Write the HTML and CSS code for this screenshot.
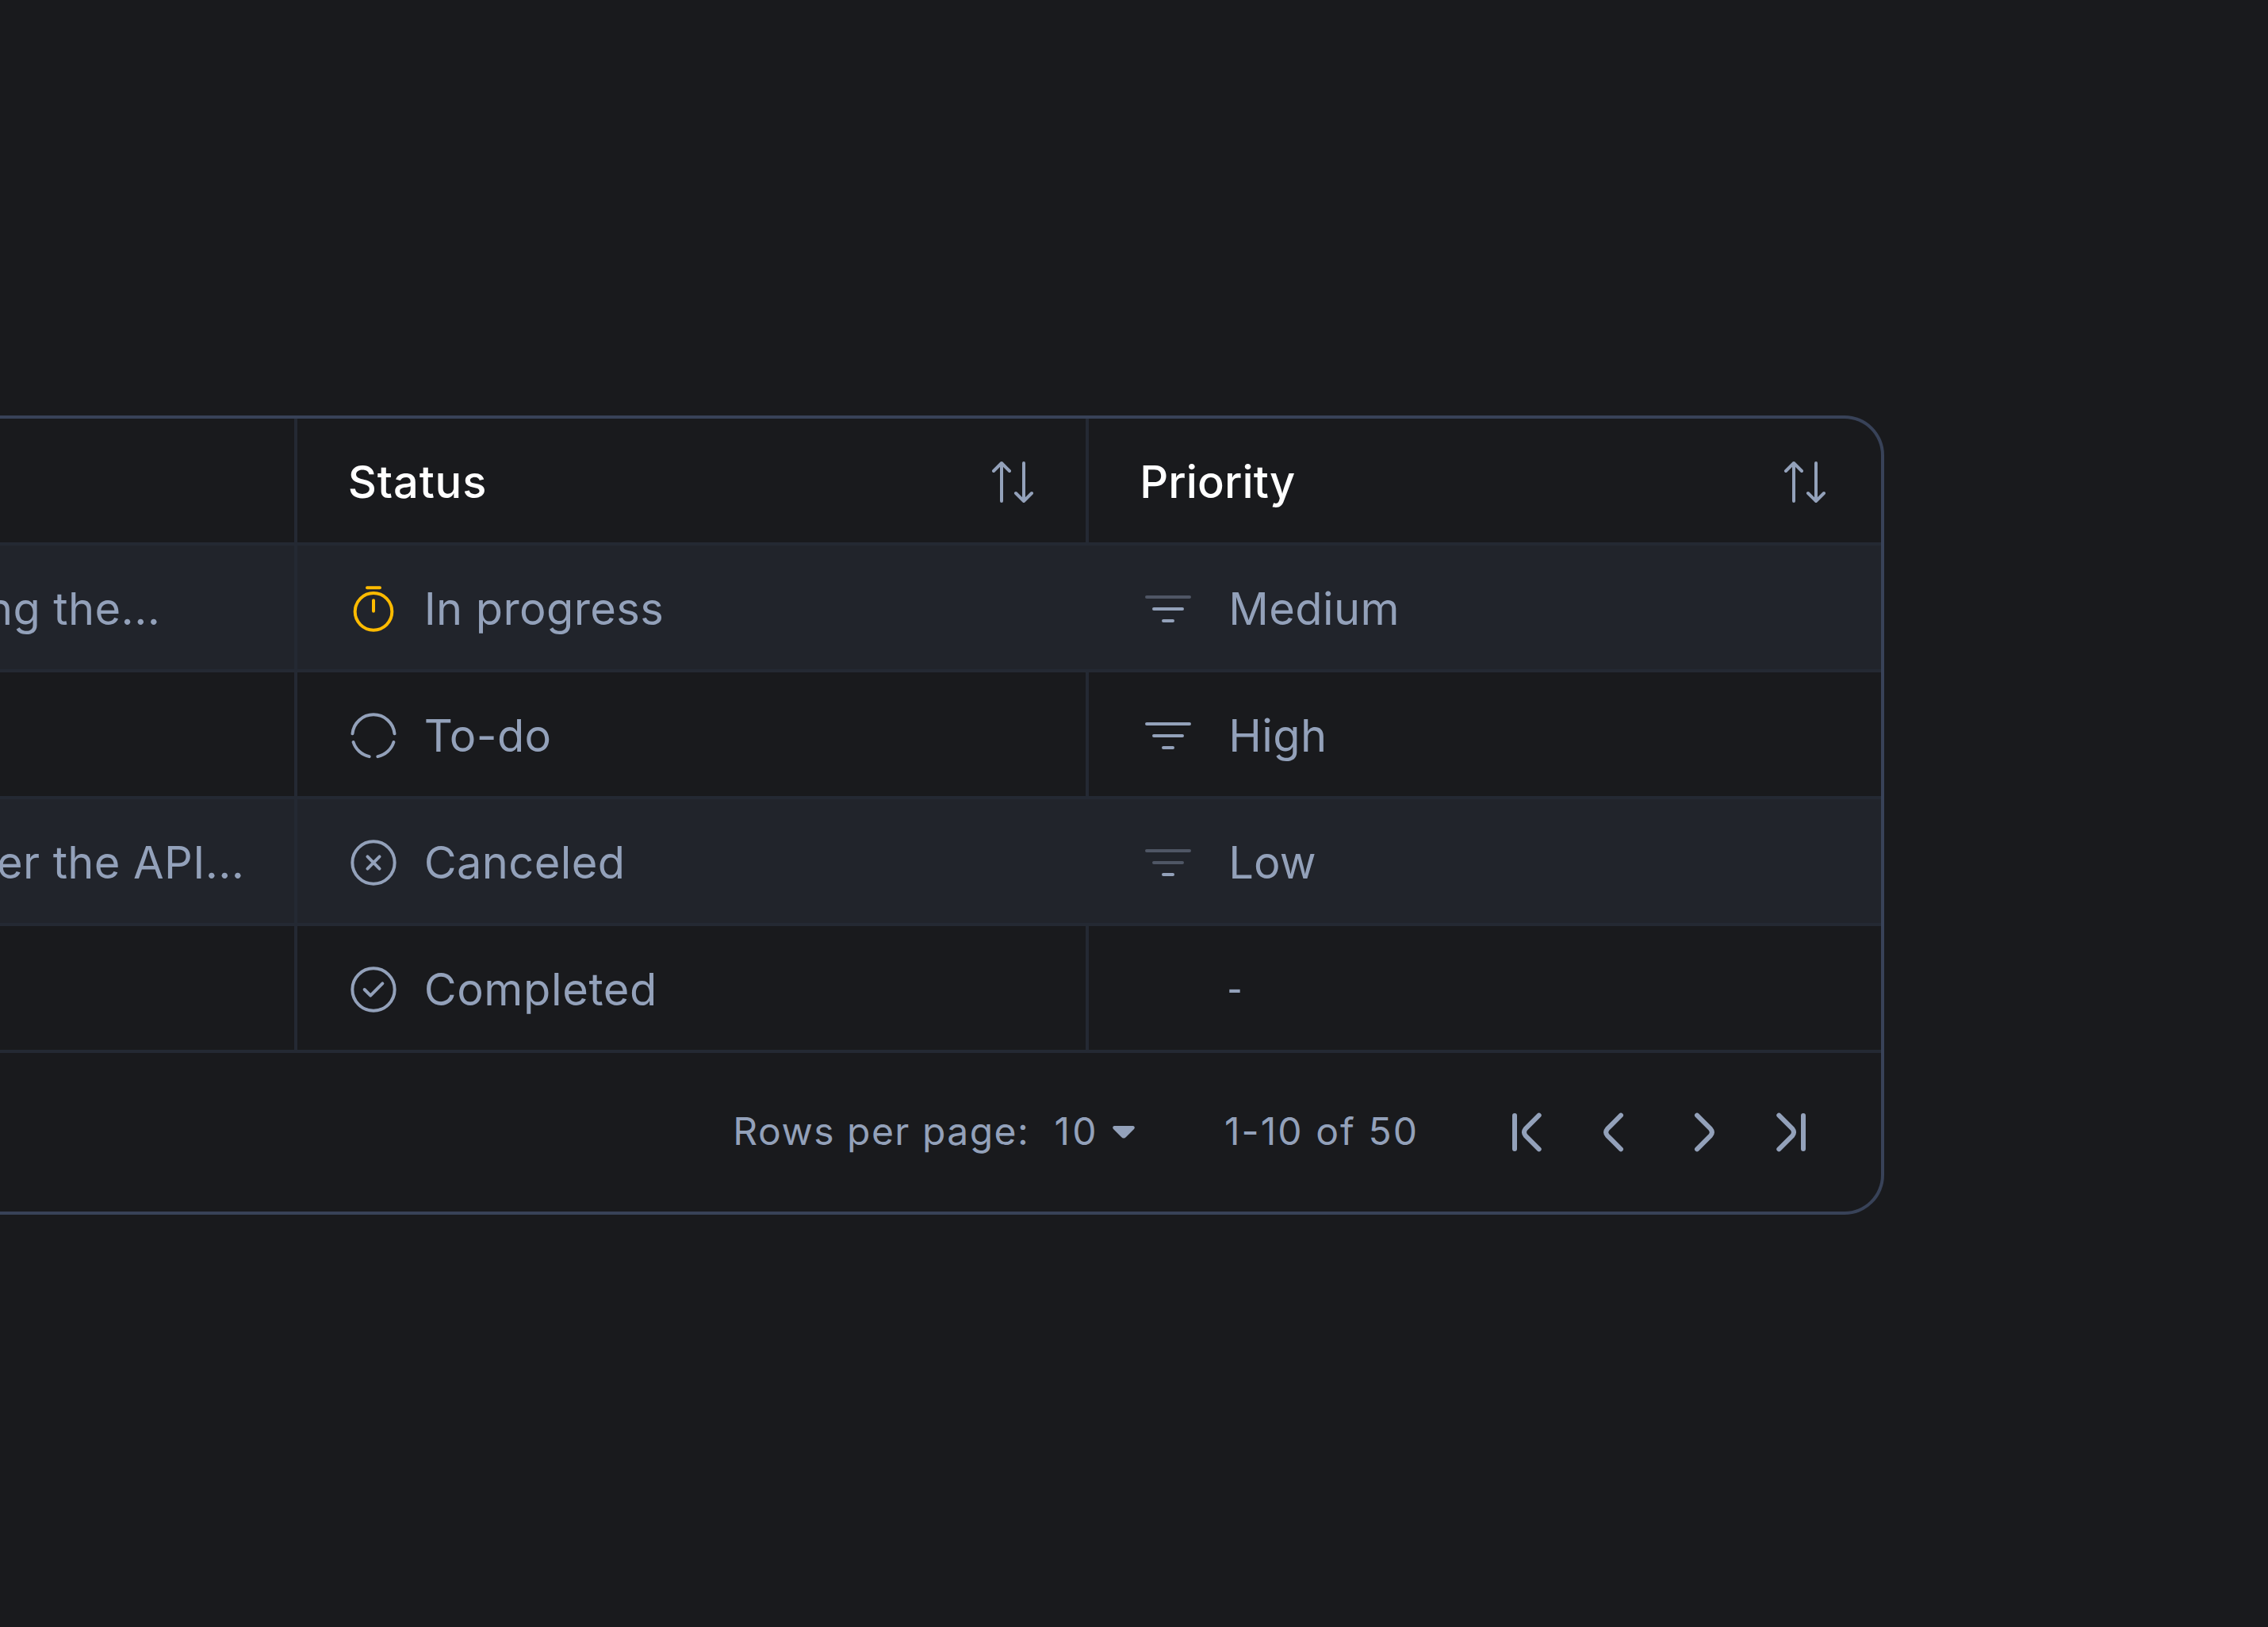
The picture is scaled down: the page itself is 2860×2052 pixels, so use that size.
FILE: index.html
```html
<!DOCTYPE html>
<html lang="en">
<head>
  <meta charset="UTF-8" />
  <meta name="viewport" content="width=device-width, initial-scale=1.0"/>
  <title>Tasks</title>
  <link rel="stylesheet" href="styles.css">
</head>
<body>
  <div class="table">
    <div class="row header">
      <div class="cell task"></div>
      <div class="cell">
        <span class="wide">Status</span>
        <svg class="icon sort" viewBox="0 0 64 64"><path d="M18 56V8M8 18L18 8L28 18M46 8V56M36 46L46 56L56 46"/></svg>
      </div>
      <div class="cell">
        <span class="tight">Priority</span>
        <svg class="icon sort" viewBox="0 0 64 64"><path d="M18 56V8M8 18L18 8L28 18M46 8V56M36 46L46 56L56 46"/></svg>
      </div>
    </div>

    <div class="row striped">
      <div class="cell task"><span class="task-first">ng the...</span></div>
      <div class="cell">
        <svg class="icon status progress" viewBox="0 0 24 24"><circle cx="12" cy="13.25" r="8.75"/><path d="M12 8V13M9 2H15"/></svg>
        <span>In progress</span>
      </div>
      <div class="cell">
        <svg class="icon priority" viewBox="0 0 72 72"><path class="off" d="M9 21H63"/><path d="M18 36H54M30 51H42"/></svg>
        <span>Medium</span>
      </div>
    </div>

    <div class="row">
      <div class="cell task"></div>
      <div class="cell">
        <svg class="icon status" viewBox="0 0 24 24"><path d="M2.05 11A10 10 0 0 1 21.95 11M21.53 15A10 10 0 0 1 14 21.8M2.47 15A10 10 0 0 0 10 21.8"/></svg>
        <span>To-do</span>
      </div>
      <div class="cell">
        <svg class="icon priority" viewBox="0 0 72 72"><path d="M9 21H63M18 36H54M30 51H42"/></svg>
        <span>High</span>
      </div>
    </div>

    <div class="row striped">
      <div class="cell task"><span class="task-second">er the API...</span></div>
      <div class="cell">
        <svg class="icon status" viewBox="0 0 24 24"><circle cx="12" cy="12" r="10"/><path d="M9.17 14.83L14.83 9.17M14.83 14.83L9.17 9.17"/></svg>
        <span>Canceled</span>
      </div>
      <div class="cell">
        <svg class="icon priority" viewBox="0 0 72 72"><path class="off" d="M9 21H63M18 36H54"/><path d="M30 51H42"/></svg>
        <span class="tight">Low</span>
      </div>
    </div>

    <div class="row">
      <div class="cell task"></div>
      <div class="cell">
        <svg class="icon status" viewBox="0 0 24 24"><circle cx="12" cy="12" r="10"/><path d="M7.75 12L10.58 14.83L16.25 9.17"/></svg>
        <span class="done">Completed</span>
      </div>
      <div class="cell">
        <span class="empty">-</span>
      </div>
    </div>

    <div class="footer">
      <span class="label">Rows per page:</span>
      <span class="size">10</span>
      <svg class="caret" viewBox="0 0 28 16"><path d="M2 0H26Q29 1 27 4L17 14Q14 17 11 14L1 4Q-1 1 2 0Z"/></svg>
      <span class="range">1-10 of 50</span>
      <div class="pager">
        <svg class="icon" viewBox="0 0 64 64"><path d="M18 11V53M48.700 10.700L31.700 27.700Q28.300 32 31.700 36.300L48.700 53.300"/></svg>
        <svg class="icon" viewBox="0 0 64 64"><path d="M40 10.700L23 27.700Q19.300 32 23 36.300L40 53.300"/></svg>
        <svg class="icon" viewBox="0 0 64 64"><path d="M24 10.700L41 27.700Q44.700 32 41 36.300L24 53.300"/></svg>
        <svg class="icon" viewBox="0 0 64 64"><path d="M46 11V53M15.300 10.700L32.300 27.700Q35.700 32 32.300 36.300L15.300 53.300"/></svg>
      </div>
    </div>
  </div>
</body>
</html>
```
FILE: styles.css
```css
body {
  font-family: Inter, "Open Sans", sans-serif;
  background-color: #191a1d;
  color: #93a1ba;
  margin: 0;
  padding: 524px 484px 0 0;
  min-height: 100vh;
  box-sizing: border-box;
  overflow: hidden;
}

.table {
  border: 4px solid #384258;
  border-left: none;
  border-radius: 0 50px 50px 0;
  overflow: hidden;
}

.row {
  display: grid;
  grid-template-columns: 374.67px 1fr 1fr;
  height: 160px;
  font-size: 56px;
  letter-spacing: 0.007em;
  box-shadow: inset 0 -4px #242933;
}

.header {
  color: #fff;
  font-weight: 500;
}

.striped {
  background-color: #21242b;
}

.cell {
  display: flex;
  align-items: center;
  padding: 0 60px 0 64px;
  border-right: 4px solid #242933;
  white-space: nowrap;
}

.cell:last-child,
.striped .cell:nth-child(2) {
  border-color: transparent;
}

.wide {
  letter-spacing: 0.016em;
}

.tight {
  letter-spacing: 0.002em;
}

.done {
  letter-spacing: 0.011em;
}

.task {
  padding: 0;
  overflow: hidden;
}

.task-first {
  margin-left: -17px;
}

.task-second {
  margin-left: -4px;
}

.icon {
  width: 64px;
  height: 64px;
  flex-shrink: 0;
  fill: none;
  stroke: #93a1ba;
  stroke-width: 4;
  stroke-linecap: round;
  stroke-linejoin: round;
}

.sort {
  margin-left: auto;
}

.status {
  stroke-width: 1.5;
  margin-right: 32px;
}

.progress {
  stroke: #ffbb00;
}

.priority {
  width: 72px;
  height: 72px;
  margin-right: 40px;
}

.off {
  stroke: #4f5665;
}

.empty {
  font-family: Roboto, sans-serif;
  margin-left: 112px;
}

.footer {
  display: flex;
  align-items: center;
  justify-content: flex-end;
  height: 200px;
  padding-right: 80px;
  font-size: 48px;
  letter-spacing: 0.031em;
}

.footer span {
  padding-bottom: 3px;
}

.size {
  margin-left: 31px;
  letter-spacing: 0.07em;
}

.caret {
  width: 28px;
  height: 16px;
  margin-left: 17px;
  fill: #93a1ba;
}

.range {
  margin-left: 113px;
  letter-spacing: 0.043em;
}

.pager {
  display: flex;
  gap: 48px;
  margin-left: 103px;
}

.pager .icon {
  stroke-width: 6;
}
```
